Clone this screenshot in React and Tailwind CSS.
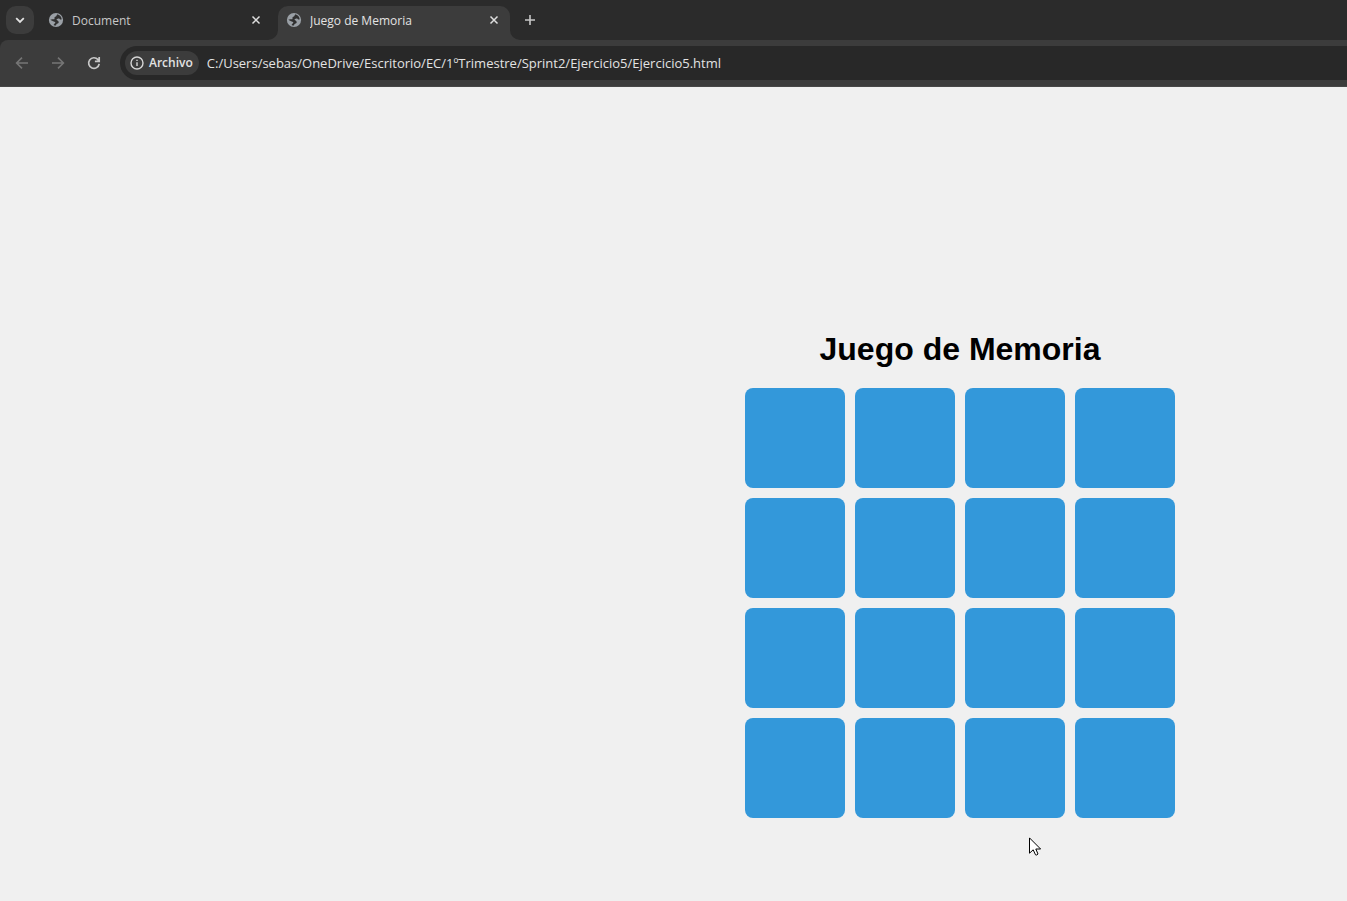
import React from "react";

const cards = Array.from({ length: 16 }, (_, i) => i + 1);

function GlobeIcon() {
  return (
    <svg className="size-4 shrink-0" viewBox="0 0 16 16" aria-hidden="true">
      <circle cx="8" cy="8" r="7.1" fill="#9aa0a6" />
      <path
        d="M9.300 2.300C11.800 2.800 13.500 4.900 13.700 7.300c-.8.500-1.500.2-2-.3-.5-.5-1.200-.4-1.900-.3-.6.1-1.100.4-1.300.9.300.7 1 .9 1.600 1.300.8.600.8 1.700.1 2.300-.7.600-1.600.4-1.900 1.300l-.3 1.100C6.900 13.500 6.100 13.200 5.500 12.900L7.400 10.600C7 9.600 6 9.400 5 9.200 3.900 8.900 2.900 8.500 2.400 7.600 3.600 7.100 5 7.300 6.200 7.200 6.900 6.900 6.300 6.200 6.500 5.500c.3-.8 1.200-.7 1.700-1.300.5-.6.500-1.300 1.100-1.900z"
        fill="#303030"
      />
    </svg>
  );
}

function CloseIcon() {
  return (
    <svg className="size-4" viewBox="0 0 16 16" fill="none" stroke="#dedede" strokeWidth="1.5" aria-hidden="true">
      <path d="M4.500 4.500l7 7M11.500 4.500l-7 7" />
    </svg>
  );
}

function TabFlare({ className, d }) {
  return (
    <svg className={className} viewBox="0 0 10 10" aria-hidden="true">
      <path d={d} fill="#3c3c3c" />
    </svg>
  );
}

function Tab({ title, active }) {
  return (
    <div
      className={
        active
          ? "relative flex h-[34px] w-[232px] items-center rounded-t-[10px] bg-[#3c3c3c] px-2 pb-[6px] text-[#e3e3e3]"
          : "relative flex h-[34px] w-[232px] items-center px-2 pb-[6px] text-[#c7c7c7]"
      }
    >
      <button type="button" role="tab" aria-selected={active} className="flex h-7 min-w-0 flex-1 items-center gap-2 text-left text-xs">
        <GlobeIcon />
        <span className="truncate pt-[2px]">{title}</span>
      </button>
      <button type="button" aria-label={"Cerrar " + title} className="flex size-4 items-center justify-center">
        <CloseIcon />
      </button>
      {active && (
        <>
          <TabFlare className="absolute bottom-0 -left-[10px] size-[10px]" d="M10 0v10H0A10 10 0 0 0 10 0z" />
          <TabFlare className="absolute -right-[10px] bottom-0 size-[10px]" d="M0 0v10h10A10 10 0 0 1 0 0z" />
        </>
      )}
    </div>
  );
}

export default function App() {
  return (
    <div className="flex min-h-screen flex-col overflow-hidden bg-[#f0f0f0] font-['Open_Sans','Noto_Sans',sans-serif]">
      <header className="bg-[#2b2b2b]">
        <div className="flex h-10 items-end pl-[6px]">
          <button type="button" aria-label="Buscar pestañas" className="mb-[6px] flex size-7 items-center justify-center rounded-[10px] bg-[#3c3c3c]">
            <svg className="size-4" viewBox="0 0 16 16" fill="none" stroke="#e3e3e3" strokeWidth="1.800" aria-hidden="true">
              <path d="M4.200 6.200L8 9.900l3.800-3.700" />
            </svg>
          </button>
          <div role="tablist" className="ml-[6px] flex gap-[6px]">
            <Tab title="Document" active={false} />
            <Tab title="Juego de Memoria" active={true} />
          </div>
          <button type="button" aria-label="Nueva pestaña" className="mb-[6px] ml-[6px] flex size-7 items-center justify-center">
            <svg className="size-4" viewBox="0 0 16 16" fill="none" stroke="#c7c7c7" strokeWidth="1.600" aria-hidden="true">
              <path d="M8 3v10M3 8h10" />
            </svg>
          </button>
        </div>

        <div className="flex h-[47px] items-center rounded-tl-lg border-b border-[#474747] bg-[#3c3c3c] pl-2">
          <div className="flex gap-2">
            <button type="button" aria-label="Atrás" disabled className="flex size-7 items-center justify-center">
              <svg className="size-4" viewBox="0 0 16 16" fill="none" stroke="#757575" strokeWidth="1.600" aria-hidden="true">
                <path d="M14 8H3M8 2.600L2.600 8 8 13.400" />
              </svg>
            </button>
            <button type="button" aria-label="Adelante" disabled className="flex size-7 items-center justify-center">
              <svg className="size-4" viewBox="0 0 16 16" fill="none" stroke="#757575" strokeWidth="1.600" aria-hidden="true">
                <path d="M2 8h11M8 2.600L13.400 8 8 13.400" />
              </svg>
            </button>
            <button type="button" aria-label="Recargar" className="flex size-7 items-center justify-center">
              <svg className="size-4" viewBox="0 0 16 16" fill="none" stroke="#c7c7c7" strokeWidth="1.700" aria-hidden="true">
                <path d="M13.200 8.800A5.300 5.300 0 1 1 12 4.600L13 5.700M13.200 2v4.300H8.900" />
              </svg>
            </button>
          </div>
          <div className="ml-3 flex h-[34px] flex-1 items-center rounded-l-full bg-[#282828] pl-[5px]">
            <button type="button" className="flex h-6 items-center gap-1 rounded-full bg-[#3c3c3c] pr-[6px] pl-1 text-xs font-semibold text-[#e3e3e3]">
              <svg className="size-4" viewBox="0 0 16 16" fill="none" stroke="#d6d6d6" aria-hidden="true">
                <circle cx="8" cy="8" r="6" strokeWidth="1.400" />
                <path d="M8 7.200v3.800M8 4.800v1.300" strokeWidth="1.400" />
              </svg>
              Archivo
            </button>
            <input
              type="text"
              aria-label="Barra de direcciones"
              defaultValue="C:/Users/sebas/OneDrive/Escritorio/EC/1ºTrimestre/Sprint2/Ejercicio5/Ejercicio5.html"
              className="ml-2 h-6 min-w-0 flex-1 bg-transparent text-[13px] text-[#e3e3e3] outline-none"
            />
          </div>
        </div>
      </header>

      <main className="flex flex-1 flex-col items-center pt-[243px] pl-[573px]">
        <h1 className="mb-5 font-['Liberation_Sans',Arial,sans-serif] text-[32px] leading-[38px] font-bold text-black">
          Juego de Memoria
        </h1>
        <div className="relative grid grid-cols-4 gap-[10px]">
          {cards.map((n) => (
            <button key={n} type="button" aria-label={"Carta " + n} className="size-[100px] rounded-lg bg-[#3398da]" />
          ))}
          <svg className="absolute top-[449px] left-[284px] h-5 w-3" viewBox="0 0 12 20" aria-hidden="true">
            <path
              d="M.5.900V16.200L4.200 12.800 6.500 17.800Q7.700 18.600 9 17L6.800 12H11.600z"
              fill="#fff"
              stroke="#000"
              strokeWidth="1"
              strokeLinejoin="round"
            />
          </svg>
        </div>
      </main>
    </div>
  );
}
